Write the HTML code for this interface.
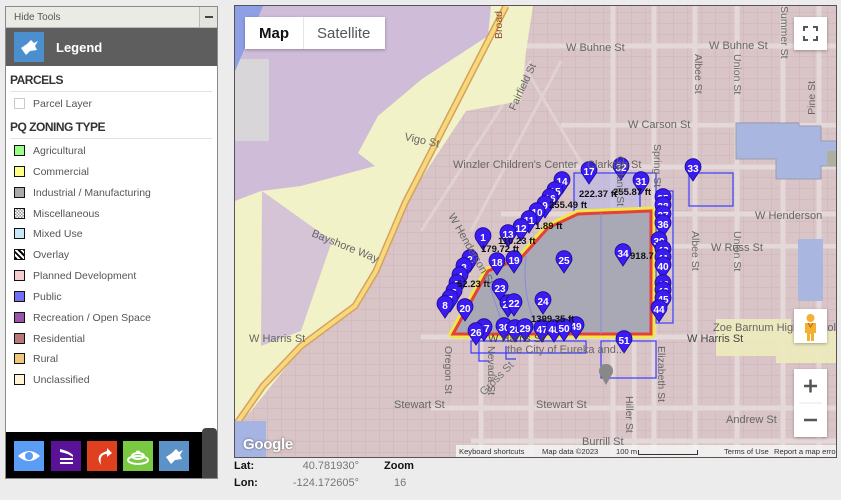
<!DOCTYPE html>
<html><head><meta charset="utf-8">
<style>
*{margin:0;padding:0;box-sizing:border-box}
body{width:841px;height:500px;background:#ececec;font-family:"Liberation Sans",sans-serif;position:relative;overflow:hidden}
#panel{position:absolute;left:5px;top:6px;width:213px;height:473px;border:1px solid #8a8a8a;background:#fff}
#hide{height:21px;background:#ebebe6;border-bottom:1px solid #bbb;font-size:10px;color:#555;padding:5px 0 0 8px;position:relative}
#hide .m{position:absolute;right:0;top:0;width:18px;height:20px;background:#e4e4de;border-left:1px solid #bbb}
#hide .m:after{content:"";position:absolute;left:5px;top:9px;width:8px;height:2px;background:#444}
#leg{height:38px;background:#5e5e5e;position:relative}
#leg .ic{position:absolute;left:8px;top:4px;width:30px;height:30px;background:#4b8fcf}
#leg span{position:absolute;left:50px;top:12px;color:#fff;font-weight:bold;font-size:13px}
.h{font-size:12px;font-weight:bold;color:#333;letter-spacing:-0.5px;position:absolute;left:4px}
.rule{position:absolute;left:4px;width:202px;height:1px;background:#e2e2e2}
.it{position:absolute;left:8px;font-size:10.5px;color:#555;height:14px;line-height:12px}
.it i{display:inline-block;width:11px;height:11px;border:1.5px solid #111;vertical-align:-2px;margin-right:8px}
#tb{position:absolute;left:0;top:425px;width:211px;height:46px;background:#000}
#tb b{position:absolute;top:9px;width:30px;height:30px}
#tb .sc{position:absolute;right:0;top:-4px;width:15px;height:50px;background:#444;border-radius:4px 4px 0 0}
#map{position:absolute;left:234px;top:5px;width:603px;height:453px;border:1px solid #555;overflow:hidden;background:#d9c5c7}
.ctl{position:absolute;background:#fff;box-shadow:0 1px 3px rgba(0,0,0,.3)}
.lbl{position:absolute;font-size:11px;color:#111}
</style></head><body>
<div id="panel">
 <div id="hide">Hide Tools<div class="m"></div></div>
 <div id="leg"><div class="ic"><svg width="30" height="30"><path d="M7 16 L13 12 L17 8 L20 11 L24 9 L21 14 L23 18 L16 19 L12 23 Z" fill="#fff"/></svg></div><span>Legend</span></div>
 <div class="h" style="top:66px">PARCELS</div><div class="rule" style="top:84px"></div>
 <div class="it" style="top:91px"><i style="border:1px solid #ccc"></i>Parcel Layer</div>
 <div class="h" style="top:113px">PQ ZONING TYPE</div><div class="rule" style="top:131px"></div>
 <div class="it" style="top:138px"><i style="background:#99ff88"></i>Agricultural</div>
 <div class="it" style="top:159px"><i style="background:#ffff88"></i>Commercial</div>
 <div class="it" style="top:180px"><i style="background:#aaa"></i>Industrial / Manufacturing</div>
 <div class="it" style="top:201px"><i style="background:repeating-conic-gradient(#999 0 25%,#fff 0 50%) 0 0/3px 3px"></i>Miscellaneous</div>
 <div class="it" style="top:221px"><i style="background:#c6e8f8"></i>Mixed Use</div>
 <div class="it" style="top:242px"><i style="background:repeating-linear-gradient(45deg,#000 0 2px,#fff 2px 4px)"></i>Overlay</div>
 <div class="it" style="top:263px"><i style="background:#f5cdcd"></i>Planned Development</div>
 <div class="it" style="top:284px"><i style="background:#6f6ff8"></i>Public</div>
 <div class="it" style="top:305px"><i style="background:#9955aa"></i>Recreation / Open Space</div>
 <div class="it" style="top:326px"><i style="background:#b87878"></i>Residential</div>
 <div class="it" style="top:346px"><i style="background:#f0c77a"></i>Rural</div>
 <div class="it" style="top:367px"><i style="background:#fff4d6"></i>Unclassified</div>
 <div id="tb">
  <b style="left:8px;background:#5b9cf5"><svg width="30" height="30"><path d="M4 15 Q15 5 26 15 Q15 25 4 15Z" fill="#fff"/><circle cx="15" cy="15" r="4" fill="#5b9cf5"/></svg></b>
  <b style="left:45px;background:#5a1296"><svg width="30" height="30"><path d="M9 8 Q18 10 22 14 L22 16 Q16 12 9 11Z M9 17 H22 V19 H9Z M9 21 H22 V23 H9Z" fill="#fff"/></svg></b>
  <b style="left:81px;background:#df401f"><svg width="30" height="30"><path d="M20 7 L25 12 L20 16 V13 Q12 13 14 24 Q7 14 20 10Z" fill="#fff"/></svg></b>
  <b style="left:117px;background:#7ac943"><svg width="30" height="30"><ellipse cx="15" cy="19" rx="10" ry="4" fill="none" stroke="#fff" stroke-width="2"/><ellipse cx="15" cy="15" rx="6" ry="3" fill="none" stroke="#fff" stroke-width="2"/><ellipse cx="15" cy="11" rx="2" ry="1.5" fill="#fff"/></svg></b>
  <b style="left:153px;background:#5b93c8"><svg width="30" height="30"><path d="M7 16 L13 12 L17 8 L20 11 L24 9 L21 14 L23 18 L16 19 L12 23 Z" fill="#fff"/></svg></b>
  <div class="sc"></div>
 </div>
</div>

<div id="map">
<svg width="603" height="453" viewBox="234 5 603 453" style="position:absolute;left:0;top:0">
<defs>
 <pattern id="g" width="14" height="11" patternUnits="userSpaceOnUse"><path d="M0 0H14M0 0V11" stroke="#cbb3b6" stroke-width="1" fill="none"/></pattern>
 <g id="pin"><path d="M0 13 L-6 4 A8 8 0 1 1 6 4 Z" fill="#3a1cf2" stroke="#1a0a90" stroke-width="0.8"/></g>
</defs>
<rect x="234" y="5" width="603" height="453" fill="url(#g)"/>
<g stroke="#e5d8d9" stroke-width="5">
 <path d="M520 45H837M560 124H837M560 166H837M500 213H837M660 245H837M420 336H837M430 407H837M470 440H837"/>
 <path d="M612 5V460M653 5V460M694 5V460M736 5V460M782 5V460M818 5V460M633 340V460M480 336V460M530 336V460"/>
</g>
<g stroke="#e0d2d4" stroke-width="3">
 <path d="M530 60 L420 230M560 60 L470 230M585 170 L520 60"/>
</g>
<path d="M234 5H490L487 35L421 78L377 115L357 152L374 165L301 185L330 240L300 330L270 335L240 390L234 400Z" fill="#cfbcd8"/>
<path d="M234 58H268V140H234Z" fill="#d8d6d8"/>
<path d="M234 5H262L234 70Z" fill="#8e9fe6"/>
<path d="M490 5H532L525 50L520 100L465 110L404 202L375 270L354 305L320 330L290 360L250 410L234 425V200L260 190L300 185L374 165L357 152L377 115L421 78L487 35Z" fill="#f2f2c8"/>
<path d="M261 190 L331 240 L300 330 L260 345 Z" fill="#cfbcd8" opacity=".85"/>
<path d="M505 5L404 202L375 270L354 305L300 345L262 385L234 425" fill="none" stroke="#d8a060" stroke-width="7"/>
<path d="M505 5L404 202L375 270L354 305L300 345L262 385L234 425" fill="none" stroke="#f5d97a" stroke-width="4"/>
<path d="M234 420H265V458H234Z" fill="#a6b4e4"/>
<path d="M735 122H798V125H820V140H837V165H820V178H775V158H735Z" fill="#a9b7e0" stroke="#9c9cb0"/>
<rect x="826" y="150" width="11" height="15" fill="#b0b0a0"/>
<rect x="797" y="238" width="25" height="62" fill="#a9b7e0"/>
<path d="M715 318H790V330H837V362H775V355H715Z" fill="#ecebbd" opacity=".9"/>
<g fill="none" stroke="#3c3cff" stroke-width="1.2">
 <rect x="573" y="172" width="66" height="40" fill="#b8b8e8" fill-opacity=".6"/>
 <rect x="639" y="172" width="16" height="40"/>
 <rect x="688" y="172" width="44" height="33"/>
 <rect x="655" y="190" width="17" height="132"/>
 <rect x="600" y="340" width="55" height="37"/>
 <path d="M470 340H585V352H470ZM478 340V360H488M505 345V358H515"/>
</g>
<path d="M452 333L487 270L520 257L547 227L577 213L650 210L650 333Z" fill="#a8a8b8" stroke="#f0e84a" stroke-width="9" stroke-linejoin="round"/>
<path d="M452 333L487 270L520 257L547 227L577 213L650 210L650 333Z" fill="#a9a9b6" stroke="#e6403a" stroke-width="3"/>
<path d="M600 212V333M485 275L505 333M525 255Q520 300 540 333" stroke="#8a8ad8" fill="none"/>
<g font-size="10" font-weight="bold" fill="#fff" text-anchor="middle" font-family="Liberation Sans,sans-serif">
<g transform="translate(561,180)"><use href="#pin"/><text y="4">14</text></g>
<g transform="translate(554,190)"><use href="#pin"/><text y="4">15</text></g>
<g transform="translate(549,197)"><use href="#pin"/><text y="4">16</text></g>
<g transform="translate(544,204)"><use href="#pin"/><text y="4">9</text></g>
<g transform="translate(536,211)"><use href="#pin"/><text y="4">10</text></g>
<g transform="translate(528,219)"><use href="#pin"/><text y="4">11</text></g>
<g transform="translate(520,227)"><use href="#pin"/><text y="4">12</text></g>
<g transform="translate(507,233)"><use href="#pin"/><text y="4">13</text></g>
<g transform="translate(482,236)"><use href="#pin"/><text y="4">1</text></g>
<g transform="translate(469,258)"><use href="#pin"/><text y="4">2</text></g>
<g transform="translate(463,266)"><use href="#pin"/><text y="4">3</text></g>
<g transform="translate(459,275)"><use href="#pin"/><text y="4">4</text></g>
<g transform="translate(456,283)"><use href="#pin"/><text y="4">5</text></g>
<g transform="translate(453,291)"><use href="#pin"/><text y="4">6</text></g>
<g transform="translate(449,298)"><use href="#pin"/><text y="4">7</text></g>
<g transform="translate(444,304)"><use href="#pin"/><text y="4">8</text></g>
<g transform="translate(464,307)"><use href="#pin"/><text y="4">20</text></g>
<g transform="translate(496,261)"><use href="#pin"/><text y="4">18</text></g>
<g transform="translate(513,259)"><use href="#pin"/><text y="4">19</text></g>
<g transform="translate(563,259)"><use href="#pin"/><text y="4">25</text></g>
<g transform="translate(622,252)"><use href="#pin"/><text y="4">34</text></g>
<g transform="translate(499,287)"><use href="#pin"/><text y="4">23</text></g>
<g transform="translate(507,303)"><use href="#pin"/><text y="4">21</text></g>
<g transform="translate(513,302)"><use href="#pin"/><text y="4">22</text></g>
<g transform="translate(542,300)"><use href="#pin"/><text y="4">24</text></g>
<g transform="translate(588,170)"><use href="#pin"/><text y="4">17</text></g>
<g transform="translate(620,166)"><use href="#pin"/><text y="4">32</text></g>
<g transform="translate(640,180)"><use href="#pin"/><text y="4">31</text></g>
<g transform="translate(692,167)"><use href="#pin"/><text y="4">33</text></g>
<g transform="translate(662,197)"><use href="#pin"/><text y="4">35</text></g>
<g transform="translate(662,205)"><use href="#pin"/><text y="4">38</text></g>
<g transform="translate(662,214)"><use href="#pin"/><text y="4">37</text></g>
<g transform="translate(662,223)"><use href="#pin"/><text y="4">36</text></g>
<g transform="translate(658,240)"><use href="#pin"/><text y="4">39</text></g>
<g transform="translate(662,249)"><use href="#pin"/><text y="4">42</text></g>
<g transform="translate(662,257)"><use href="#pin"/><text y="4">41</text></g>
<g transform="translate(662,265)"><use href="#pin"/><text y="4">40</text></g>
<g transform="translate(662,283)"><use href="#pin"/><text y="4">43</text></g>
<g transform="translate(662,290)"><use href="#pin"/><text y="4">46</text></g>
<g transform="translate(662,298)"><use href="#pin"/><text y="4">45</text></g>
<g transform="translate(658,308)"><use href="#pin"/><text y="4">44</text></g>
<g transform="translate(483,327)"><use href="#pin"/><text y="4">27</text></g>
<g transform="translate(475,331)"><use href="#pin"/><text y="4">26</text></g>
<g transform="translate(503,326)"><use href="#pin"/><text y="4">30</text></g>
<g transform="translate(514,328)"><use href="#pin"/><text y="4">28</text></g>
<g transform="translate(524,327)"><use href="#pin"/><text y="4">29</text></g>
<g transform="translate(541,328)"><use href="#pin"/><text y="4">47</text></g>
<g transform="translate(553,328)"><use href="#pin"/><text y="4">48</text></g>
<g transform="translate(575,325)"><use href="#pin"/><text y="4">49</text></g>
<g transform="translate(563,327)"><use href="#pin"/><text y="4">50</text></g>
<g transform="translate(623,339)"><use href="#pin"/><text y="4">51</text></g>
</g>
<g font-size="9.5" font-weight="bold" fill="#111" font-family="Liberation Sans,sans-serif">
<text x="578" y="196">222.37 ft</text><text x="612" y="194">255.87 ft</text>
<text x="548" y="207">255.49 ft</text><text x="534" y="228">1.89 ft</text>
<text x="497" y="243">110.23 ft</text><text x="480" y="251">179.72 ft</text>
<text x="456" y="286">52.23 ft</text><text x="629" y="258">918.7</text><text x="530" y="321">1399.35 ft</text>
</g>
<g font-size="11" fill="#666" font-family="Liberation Sans,sans-serif">
<text x="565" y="50">W Buhne St</text><text x="708" y="48">W Buhne St</text>
<text x="627" y="127">W Carson St</text><text x="452" y="167">Winzler Children's Center</text>
<text x="586" y="167">Clarkton St</text><text x="754" y="218">W Henderson</text>
<text x="710" y="250">W Russ St</text><text x="712" y="330">Zoe Barnum High School</text>
<text x="248" y="341">W Harris St</text><text x="487" y="341" fill="#444">W Harris St</text><text x="686" y="341" fill="#444">W Harris St</text>
<text x="506" y="352">the City of Eureka and...</text>
<text x="393" y="407">Stewart St</text><text x="535" y="407">Stewart St</text><text x="725" y="422">Andrew St</text><text x="581" y="444">Burrill St</text>
<text x="403" y="139" transform="rotate(12 403 139)">Vigo St</text>
<text x="310" y="235" transform="rotate(22 310 235)">Bayshore Way</text>
<text x="447" y="215" transform="rotate(60 447 215)">W Henderson St</text>
<text x="483" y="395" transform="rotate(-45 483 395)" fill="#777">Gross St</text>
</g>
<g font-size="10.5" fill="#666" font-family="Liberation Sans,sans-serif">
<text transform="translate(616,155) rotate(90)">Garland St</text>
<text transform="translate(653,143) rotate(90)">Spring St</text>
<text transform="translate(694,53) rotate(90)">Albee St</text>
<text transform="translate(733,53) rotate(90)">Union St</text>
<text transform="translate(780,5) rotate(90)">Summer St</text>
<text transform="translate(814,80) rotate(-90)" text-anchor="end">Pine St</text>
<text transform="translate(501,38) rotate(-90)" fill="#8a5030">Broad</text>
<text transform="translate(514,110) rotate(-65)">Fairfield St</text>
<text transform="translate(733,230) rotate(90)">Union St</text>
<text transform="translate(691,230) rotate(90)">Albee St</text>
<text transform="translate(625,395) rotate(90)">Hiller St</text>
<text transform="translate(657,345) rotate(90)">Elizabeth St</text>
<text transform="translate(487,345) rotate(90)">Nevada St</text>
<text transform="translate(444,345) rotate(90)">Oregon St</text>
</g>
<circle cx="605" cy="370" r="7" fill="#888"/><path d="M605 384 L600 375 H610Z" fill="#888"/>
</svg>
<div class="ctl" style="left:10px;top:11px;width:140px;height:32px;font-size:15px">
 <span style="position:absolute;left:14px;top:8px;font-weight:bold;color:#111">Map</span>
 <span style="position:absolute;left:58px;top:0;width:1px;height:32px;background:#e6e6e6"></span>
 <span style="position:absolute;left:72px;top:8px;color:#555">Satellite</span>
</div>
<div class="ctl" style="left:559px;top:11px;width:33px;height:33px"><svg width="33" height="33"><path d="M10 14V10H14M19 10H23V14M23 19V23H19M14 23H10V19" fill="none" stroke="#555" stroke-width="2"/></svg></div>
<div class="ctl" style="left:559px;top:303px;width:33px;height:34px"><svg width="33" height="34"><circle cx="16.5" cy="9" r="4" fill="#f2b130"/><path d="M11 14H22L22 24H20V32H17V25H16V32H13V24H11Z" fill="#f2b130"/><path d="M14 14L16.5 18L19 14" stroke="#d8531e" fill="none"/></svg></div>
<div class="ctl" style="left:559px;top:363px;width:33px;height:68px"><svg width="33" height="68"><path d="M10 17H23M16.5 10.5V23.5M10 51H23" stroke="#555" stroke-width="2.5"/><path d="M5 34H28" stroke="#e6e6e6"/></svg></div>
<div style="position:absolute;left:8px;top:430px;font-size:15px;color:#fff;font-weight:bold;text-shadow:0 0 2px #555;letter-spacing:-.3px">Google</div>
<div style="position:absolute;left:221px;top:439px;height:14px;width:382px;background:rgba(245,245,245,.85);font-size:7.6px;color:#333;white-space:nowrap;padding-top:2px">
 <span style="position:absolute;left:3px">Keyboard shortcuts</span>
 <span style="position:absolute;left:86px">Map data ©2023</span>
 <span style="position:absolute;left:160px">100 m</span><span style="position:absolute;left:182px;top:5px;width:60px;height:5px;border:1px solid #333;border-top:none"></span>
 <span style="position:absolute;left:268px">Terms of Use</span>
 <span style="position:absolute;left:318px">Report a map error</span>
</div>
</div>
<div class="lbl" style="left:234px;top:460px;font-weight:bold">Lat:</div>
<div class="lbl" style="left:290px;top:460px;color:#777;width:69px;text-align:right">40.781930°</div>
<div class="lbl" style="left:384px;top:460px;font-weight:bold">Zoom</div>
<div class="lbl" style="left:234px;top:477px;font-weight:bold">Lon:</div>
<div class="lbl" style="left:280px;top:477px;color:#777;width:79px;text-align:right">-124.172605°</div>
<div class="lbl" style="left:394px;top:477px;color:#777">16</div>
</body></html>
